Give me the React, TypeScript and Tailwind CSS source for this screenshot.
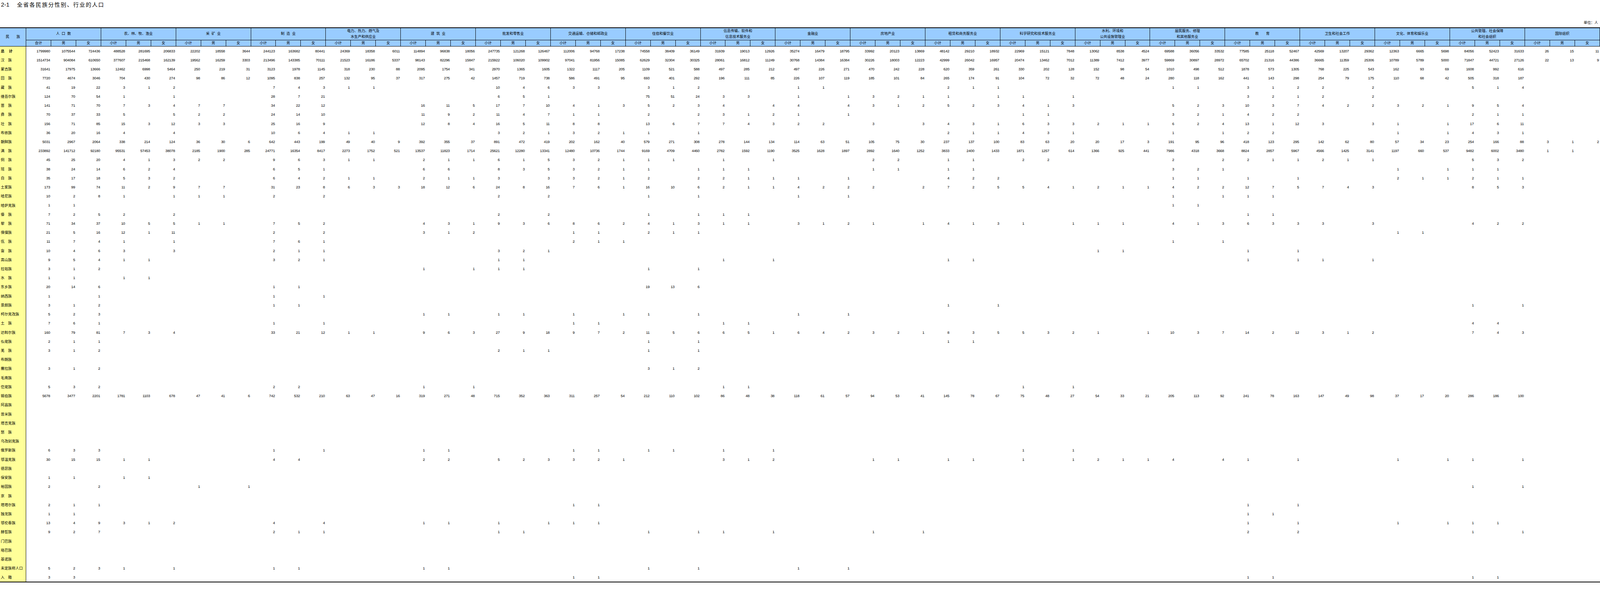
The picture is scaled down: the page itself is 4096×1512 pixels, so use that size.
import React from 'react';

// 21 industry groups, three columns each
const groups = [
  ['人  口  数'], ['农、林、牧、渔业'], ['采  矿  业'], ['制  造  业'],
  ['电力、热力、燃气及', '水生产和供应业'], ['建  筑  业'], ['批发和零售业'],
  ['交通运输、仓储和邮政业'], ['住宿和餐饮业'], ['信息传输、软件和', '信息技术服务业'],
  ['金融业'], ['房地产业'], ['租赁和商务服务业'], ['科学研究和技术服务业'],
  ['水利、环境和', '公共设施管理业'], ['居民服务、修理', '和其他服务业'], ['教　　育'],
  ['卫生和社会工作'], ['文化、体育和娱乐业'], ['公共管理、社会保障', '和社会组织'], ['国际组织'],
];

// key = group index, value = "小计 男 女" with - for an empty cell
const rows: [string, Record<number, string>][] = [
  ['总　计', ['1799980 1075544 724436', '488528 281695 206833', '22202 18558 3644', '244123 163682 80441', '24369 18358 6011', '114894 96838 18056', '247735 121268 126467', '112006 94768 17238', '74558 38409 36149', '31939 19013 12926', '35274 16479 18795', '33992 20123 13869', '48142 29210 18932', '22969 15121 7848', '13062 8538 4524', '69588 36056 33532', '77585 25118 52467', '42569 13207 29362', '12363 6665 5698', '84056 52423 31633', '26 15 11']],
  ['汉　族', ['1514734 904084 610650', '377607 215468 162139', '19562 16259 3303', '213496 143385 70111', '21523 16186 5337', '98143 82296 15847', '215922 106020 109902', '97041 81956 15085', '62629 32304 30325', '28061 16812 11249', '30768 14384 16384', '30226 18003 12223', '42999 26042 16957', '20474 13462 7012', '11389 7412 3977', '59869 30897 28972', '65702 21316 44386', '36665 11359 25306', '10789 5789 5000', '71847 44721 27126', '22 13 9']],
  ['蒙古族', ['31641 17975 13666', '12462 6998 5464', '250 219 31', '3123 1978 1145', '318 230 88', '2095 1754 341', '2970 1365 1605', '1322 1117 205', '1109 521 588', '497 285 212', '497 226 271', '470 242 228', '620 359 261', '330 202 128', '152 98 54', '1010 498 512', '1878 573 1305', '768 225 543', '162 93 69', '1608 992 616']],
  ['回　族', ['7720 4674 3046', '704 430 274', '98 86 12', '1095 838 257', '132 95 37', '317 275 42', '1457 719 738', '586 491 95', '693 401 292', '196 111 85', '226 107 119', '185 101 84', '265 174 91', '104 72 32', '72 48 24', '280 118 162', '441 143 298', '254 79 175', '110 68 42', '505 318 187']],
  ['藏　族', { 0: '41 19 22', 1: '3 1 2', 3: '7 4 3', 4: '1 1 -', 6: '10 4 6', 7: '3 3 -', 8: '3 1 2', 10: '1 1 -', 12: '2 1 1', 15: '1 1 -', 16: '3 1 2', 17: '2 - 2', 19: '5 1 4' }],
  ['维吾尔族', { 0: '124 70 54', 1: '1 - 1', 3: '28 7 21', 6: '6 5 1', 8: '75 51 24', 9: '3 3 -', 10: '1 - 1', 11: '3 2 1', 12: '1 - 1', 13: '1 - 1', 16: '3 2 1', 17: '2 - 2' }],
  ['苗　族', { 0: '141 71 70', 1: '7 3 4', 2: '7 7 -', 3: '34 22 12', 5: '16 11 5', 6: '17 7 10', 7: '4 1 3', 8: '5 2 3', 9: '4 - 4', 10: '4 - 4', 11: '3 1 2', 12: '5 2 3', 13: '4 1 3', 15: '5 2 3', 16: '10 3 7', 17: '4 2 2', 18: '3 2 1', 19: '9 5 4' }],
  ['彝　族', { 0: '70 37 33', 1: '5 - 5', 2: '2 2 -', 3: '24 14 10', 5: '11 9 2', 6: '11 4 7', 7: '1 1 -', 8: '2 - 2', 9: '3 1 2', 10: '1 - 1', 13: '1 1 -', 15: '3 2 1', 16: '4 2 2', 19: '2 1 1' }],
  ['壮　族', { 0: '156 71 85', 1: '15 3 12', 2: '3 3 -', 3: '25 16 9', 5: '12 8 4', 6: '16 5 11', 7: '8 8 -', 8: '13 6 7', 9: '7 4 3', 10: '2 2 -', 11: '3 - 3', 12: '4 3 1', 13: '6 3 3', 14: '2 1 1', 15: '6 2 4', 16: '13 1 12', 17: '3 - 3', 18: '1 - 1', 19: '17 6 11' }],
  ['布依族', { 0: '36 20 16', 1: '4 - 4', 3: '10 6 4', 4: '1 1 -', 6: '3 2 1', 7: '3 2 1', 8: '1 - 1', 12: '2 1 1', 13: '4 3 1', 15: '1 - 1', 16: '2 2 -', 18: '1 - 1', 19: '4 3 1' }],
  ['朝鲜族', ['5031 2967 2064', '338 214 124', '36 30 6', '642 443 199', '49 40 9', '392 355 37', '891 472 419', '202 162 40', '579 271 308', '278 144 134', '114 63 51', '105 75 30', '237 137 100', '83 63 20', '20 17 3', '191 95 96', '418 123 295', '142 62 80', '57 34 23', '254 166 88', '3 1 2']],
  ['满　族', ['233892 141712 92180', '95531 57453 38078', '2185 1900 285', '24771 16354 8417', '2273 1752 521', '13537 11823 1714', '25621 12280 13341', '12480 10736 1744', '9169 4709 4460', '2782 1592 1190', '3525 1628 1897', '2892 1640 1252', '3833 2400 1433', '1871 1257 614', '1366 925 441', '7986 4318 3668', '8824 2857 5967', '4566 1425 3141', '1197 660 537', '9482 6002 3480', '1 1 -']],
  ['侗　族', { 0: '45 25 20', 1: '4 1 3', 2: '2 2 -', 3: '9 6 3', 4: '1 1 -', 5: '2 1 1', 6: '6 1 5', 7: '3 2 1', 8: '1 1 -', 9: '1 - 1', 11: '2 2 -', 12: '1 1 -', 13: '2 2 -', 15: '2 - 2', 16: '2 1 1', 17: '2 1 1', 19: '5 3 2' }],
  ['瑶　族', { 0: '38 24 14', 1: '6 2 4', 3: '6 5 1', 5: '6 6 -', 6: '8 3 5', 7: '3 2 1', 8: '1 - 1', 9: '1 1 -', 11: '1 1 -', 12: '1 1 -', 15: '3 2 1', 18: '1 - 1', 19: '1 1 -' }],
  ['白　族', { 0: '35 17 18', 1: '5 3 2', 3: '6 4 2', 4: '1 1 -', 5: '2 1 1', 6: '3 - 3', 7: '3 2 1', 8: '2 - 2', 9: '2 1 1', 10: '1 - 1', 12: '4 2 2', 15: '1 1 -', 16: '1 - 1', 18: '2 1 1', 19: '2 1 1' }],
  ['土家族', { 0: '173 99 74', 1: '11 2 9', 2: '7 7 -', 3: '31 23 8', 4: '6 3 3', 5: '18 12 6', 6: '24 8 16', 7: '7 6 1', 8: '16 10 6', 9: '2 1 1', 10: '4 2 2', 11: '2 - 2', 12: '7 2 5', 13: '5 4 1', 14: '2 1 1', 15: '4 2 2', 16: '12 7 5', 17: '7 4 3', 19: '8 5 3' }],
  ['哈尼族', { 0: '10 2 8', 1: '1 - 1', 2: '1 1 -', 3: '2 - 2', 6: '2 - 2', 8: '1 - 1', 10: '1 - 1', 15: '1 - 1', 16: '1 1 -' }],
  ['哈萨克族', { 0: '1 1 -', 15: '1 1 -' }],
  ['傣　族', { 0: '7 2 5', 1: '2 - 2', 6: '2 - 2', 8: '1 - 1', 9: '1 1 -', 16: '1 1 -' }],
  ['黎　族', { 0: '71 34 37', 1: '10 5 5', 2: '1 1 -', 3: '7 5 2', 5: '4 3 1', 6: '9 3 6', 7: '8 6 2', 8: '4 1 3', 9: '1 1 -', 10: '3 1 2', 11: '1 - 1', 12: '4 1 3', 13: '1 - 1', 14: '1 1 -', 15: '4 1 3', 16: '6 3 3', 17: '3 - 3', 19: '4 2 2' }],
  ['傈僳族', { 0: '21 5 16', 1: '12 1 11', 3: '2 - 2', 5: '3 1 2', 7: '1 1 -', 8: '2 1 1', 18: '1 1 -' }],
  ['佤　族', { 0: '11 7 4', 1: '1 - 1', 3: '7 6 1', 7: '2 1 1', 15: '1 - 1' }],
  ['畲　族', { 0: '10 4 6', 1: '3 - 3', 3: '2 1 1', 6: '3 2 1', 14: '1 1 -', 16: '1 - 1' }],
  ['高山族', { 0: '9 5 4', 1: '1 1 -', 3: '3 2 1', 6: '1 1 -', 9: '1 - 1', 12: '1 1 -', 16: '1 - 1', 17: '1 - 1' }],
  ['拉祜族', { 0: '3 1 2', 5: '1 - 1', 6: '1 1 -', 8: '1 - 1' }],
  ['水　族', { 0: '1 1 -', 1: '1 1 -' }],
  ['东乡族', { 0: '20 14 6', 3: '1 1 -', 8: '19 13 6' }],
  ['纳西族', { 0: '1 - 1', 3: '1 - 1' }],
  ['景颇族', { 0: '3 1 2', 3: '1 1 -', 12: '1 - 1', 19: '1 - 1' }],
  ['柯尔克孜族', { 0: '5 2 3', 5: '1 1 -', 6: '1 1 -', 7: '1 - 1', 8: '1 - 1', 10: '1 - 1' }],
  ['土　族', { 0: '7 6 1', 3: '1 - 1', 7: '1 1 -', 9: '1 1 -', 19: '4 4 -' }],
  ['达斡尔族', { 0: '160 79 81', 1: '7 3 4', 3: '33 21 12', 4: '1 1 -', 5: '9 6 3', 6: '27 9 18', 7: '9 7 2', 8: '11 5 6', 9: '6 5 1', 10: '6 4 2', 11: '3 2 1', 12: '8 3 5', 13: '5 3 2', 14: '1 - 1', 15: '10 3 7', 16: '14 2 12', 17: '3 1 2', 19: '7 4 3' }],
  ['仫佬族', { 0: '2 1 1', 8: '1 - 1', 12: '1 1 -' }],
  ['羌　族', { 0: '3 1 2', 6: '2 1 1', 8: '1 - 1' }],
  ['布朗族', {}],
  ['撒拉族', { 0: '3 1 2', 8: '3 1 2' }],
  ['毛南族', {}],
  ['仡佬族', { 0: '5 3 2', 3: '2 2 -', 5: '1 - 1', 9: '1 1 -', 13: '1 - 1' }],
  ['锡伯族', ['5678 3477 2201', '1781 1103 678', '47 41 6', '742 532 210', '63 47 16', '319 271 48', '715 352 363', '311 257 54', '212 110 102', '86 48 38', '118 61 57', '94 53 41', '145 78 67', '75 48 27', '54 33 21', '205 113 92', '241 78 163', '147 49 98', '37 17 20', '286 186 100']],
  ['阿昌族', {}],
  ['普米族', {}],
  ['塔吉克族', {}],
  ['怒　族', {}],
  ['乌孜别克族', {}],
  ['俄罗斯族', { 0: '6 3 3', 3: '1 - 1', 5: '1 1 -', 7: '1 1 -', 8: '1 1 -', 9: '1 - 1', 13: '1 - 1' }],
  ['鄂温克族', { 0: '30 15 15', 1: '1 1 -', 3: '4 4 -', 5: '2 2 -', 6: '5 2 3', 7: '3 2 1', 9: '3 1 2', 11: '1 1 -', 12: '1 1 -', 13: '1 - 1', 14: '2 1 1', 15: '4 - 4', 16: '1 - 1', 18: '1 - 1', 19: '1 - 1' }],
  ['德昂族', {}],
  ['保安族', { 0: '1 1 -', 1: '1 1 -' }],
  ['裕固族', { 0: '2 - 2', 2: '1 - 1', 19: '1 - 1' }],
  ['京　族', {}],
  ['塔塔尔族', { 0: '2 1 1', 7: '1 1 -', 16: '1 - 1' }],
  ['独龙族', { 0: '1 1 -', 16: '1 1 -' }],
  ['鄂伦春族', { 0: '13 4 9', 1: '3 1 2', 3: '4 - 4', 5: '1 1 -', 6: '1 - 1', 7: '1 1 -', 16: '1 - 1', 18: '1 - 1', 19: '1 1 -' }],
  ['赫哲族', { 0: '9 2 7', 3: '2 1 1', 6: '1 1 -', 8: '1 - 1', 9: '1 - 1', 11: '1 - 1', 16: '2 - 2', 19: '1 - 1' }],
  ['门巴族', {}],
  ['珞巴族', {}],
  ['基诺族', {}],
  ['未定族称人口', { 0: '5 2 3', 1: '1 - 1', 3: '1 1 -', 5: '1 1 -', 8: '1 - 1', 10: '1 - 1' }],
  ['入　籍', { 0: '3 3 -', 7: '1 1 -', 16: '1 1 -', 19: '1 1 -' }],
];

const toCells = (data: Record<number, string>) => {
  const cells: string[] = Array(63).fill('');
  Object.entries(data).forEach(([g, triple]) => {
    triple.split(' ').forEach((v, j) => {
      cells[Number(g) * 3 + j] = v === '-' ? '' : v;
    });
  });
  return cells;
};

export default function App() {
  return (
    <div className="w-[4096px] h-[1512px] overflow-hidden bg-white text-black font-['Liberation_Sans','Noto_Sans_CJK_SC',sans-serif]">
      <div className="h-[25px] flex items-center pl-[2.5px]">
        <span className="w-[41px] shrink-0 text-[15px]">2-1</span>
        <h1 className="text-[14px] tracking-[2px] font-normal">全省各民族分性别、行业的人口</h1>
      </div>
      <div className="mt-[23.5px] h-[21px] flex items-center justify-end pr-[5px] text-[9.2px]">单位：人</div>

      <table className="w-[4096px] table-fixed border-collapse border-t-2 border-b-2 border-black">
        <colgroup>
          <col className="w-[66.5px]" />
          {Array.from({ length: 63 }, (_, i) => (
            <col key={i} className="w-[63.89px]" />
          ))}
        </colgroup>
        <thead className="bg-[#99ccff] text-[9.2px]">
          <tr className="h-[28.6px]">
            <th rowSpan={2} className="font-normal border-r border-b border-black">民　　族</th>
            {groups.map((lines, i) => (
              <th key={i} colSpan={3} className="font-normal border-r border-b border-black leading-[15px] whitespace-pre">
                {lines.map((l) => (
                  <div key={l}>{l}</div>
                ))}
              </th>
            ))}
          </tr>
          <tr className="h-[16.9px]">
            {groups.map((_, i) => (
              <React.Fragment key={i}>
                <th className="font-normal border-r border-b border-black leading-none">{i === 0 ? '合计' : '小计'}</th>
                <th className="font-normal border-r border-b border-black leading-none">男</th>
                <th className="font-normal border-r border-b border-black leading-none">女</th>
              </React.Fragment>
            ))}
          </tr>
        </thead>
        <tbody>
          {rows.map(([name, data], r) => (
            <tr key={name} className="h-[23.23px]">
              <th className={`bg-[#ffff99] border-r border-black text-left pl-[2px] text-[9.4px] leading-none whitespace-nowrap ${r === 0 ? 'font-bold tracking-[1px]' : 'font-normal'}`}>
                {name}
              </th>
              {toCells(data).map((v, c) => (
                <td key={c} className="text-right pr-[2.3px] text-[9.5px] tracking-[-0.34px] leading-none">
                  {v}
                </td>
              ))}
            </tr>
          ))}
        </tbody>
      </table>
    </div>
  );
}
